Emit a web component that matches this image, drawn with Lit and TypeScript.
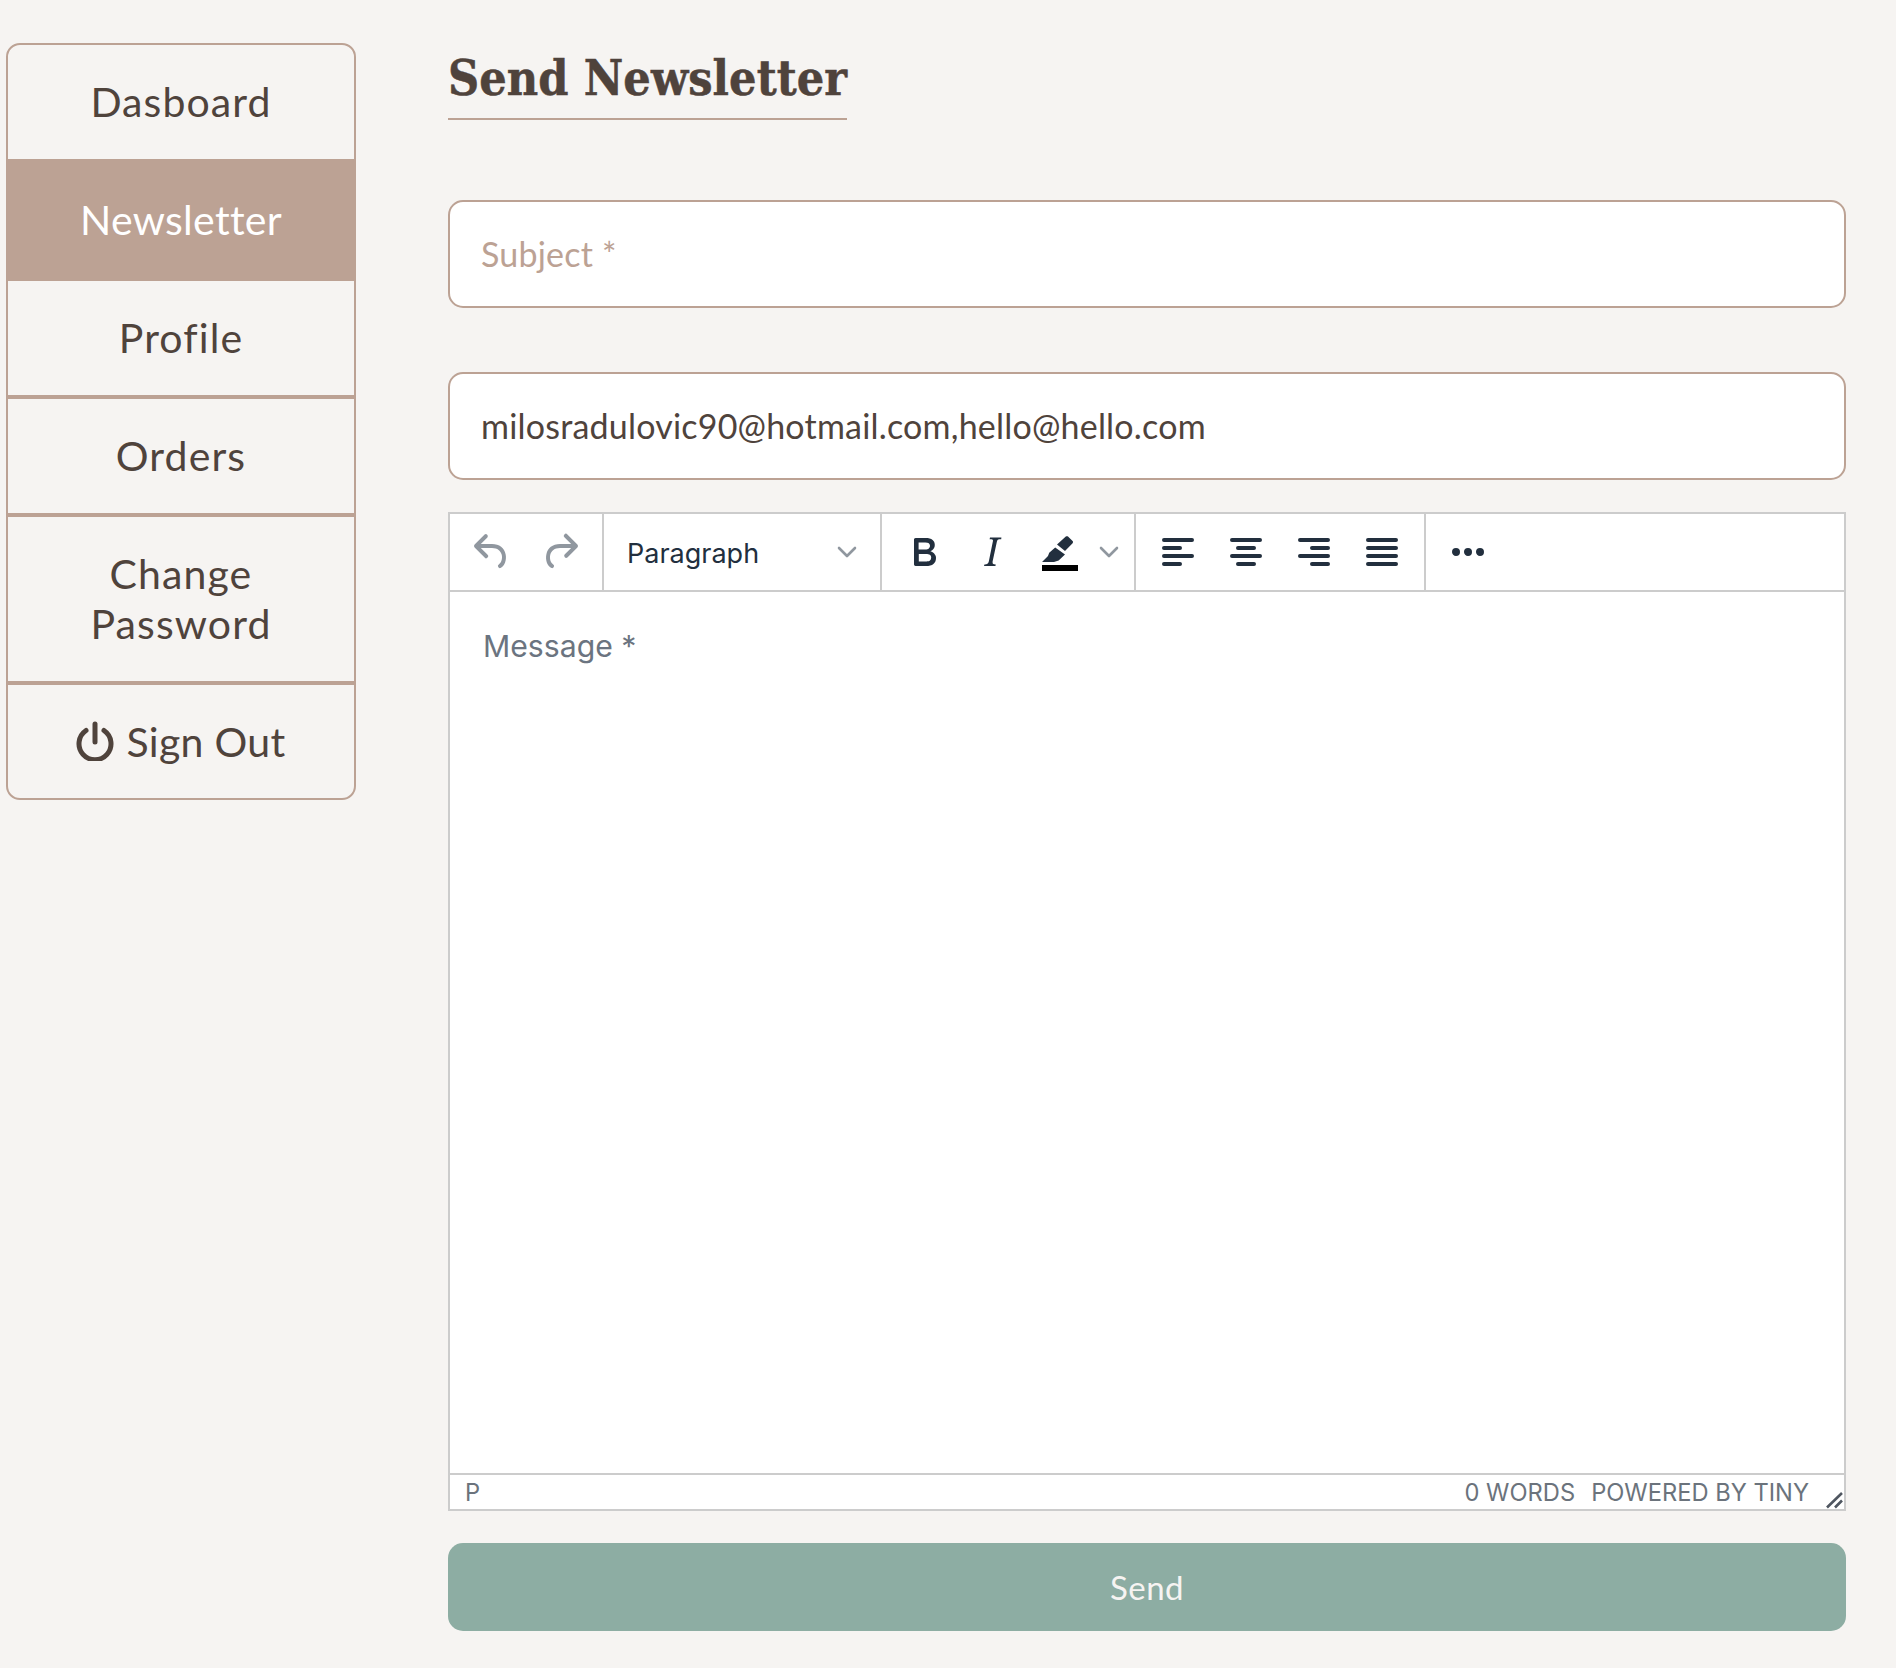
import { LitElement, html, css, svg } from "lit";
import { customElement } from "lit/decorators.js";

const ic = (d: string) => html`<svg class="ic" viewBox="0 0 24 24"><path d=${d}></path></svg>`;
const row = (x: number, w: number, y: number) => `M${x + 1} ${y}h${w - 2}a1 1 0 0 1 0 2H${x + 1}a1 1 0 0 1 0-2Z`;
const lines = (a: [number, number][]) => a.map(([x, w], i) => row(x, w, 5 + i * 4)).join("");

const UNDO = "M6.4 8H12c3.7 0 6.2 2 6.8 5.1.6 2.7-.4 5.6-2.3 6.8a1 1 0 0 1-1-1.8c1.1-.6 1.8-2.7 1.4-4.6-.5-2.1-2.1-3.5-4.9-3.5H6.4l3.3 3.3a1 1 0 1 1-1.4 1.4l-5-5a1 1 0 0 1 0-1.4l5-5a1 1 0 0 1 1.4 1.4L6.4 8Z";
const REDO = "M17.6 10H12c-2.8 0-4.4 1.4-4.9 3.5-.4 2 .3 4 1.4 4.6a1 1 0 1 1-1 1.8c-2-1.2-2.9-4.1-2.3-6.8.6-3 3-5.1 6.8-5.1h5.6l-3.3-3.3a1 1 0 1 1 1.4-1.4l5 5a1 1 0 0 1 0 1.4l-5 5a1 1 0 0 1-1.4-1.4l3.3-3.3Z";
const BOLD = "M7.8 19c-.3 0-.5 0-.6-.2l-.2-.5V5.7c0-.2 0-.4.2-.5l.6-.2h5c1.5 0 2.7.3 3.5 1 .7.6 1.1 1.4 1.1 2.5a3 3 0 0 1-.6 1.9c-.4.6-1 1-1.6 1.2.4.1.9.3 1.3.6s.8.7 1 1.2c.4.4.5 1 .5 1.6 0 1.3-.4 2.3-1.3 3-.8.7-2.1 1-3.8 1H7.8Zm5-8.3c.6 0 1.2-.1 1.6-.5.4-.3.6-.7.6-1.3 0-1.1-.8-1.7-2.3-1.7H9.3v3.5h3.4Zm.5 6c.7 0 1.3-.1 1.7-.4.4-.4.6-.9.6-1.5s-.2-1-.7-1.4c-.4-.3-1-.4-2-.4H9.4v3.8h4Z";
const ITALIC = "M16.7 4.7l-.1.9h-.3c-.6 0-1 0-1.4.3-.3.3-.4.6-.5 1.1l-2.1 9.8v.6c0 .5.4.8 1.4.8h.2l-.2.8H8l.2-.8h.2c1.1 0 1.8-.5 2-1.5l2-9.8.1-.5c0-.6-.4-.8-1.4-.8h-.3l.2-.9h5.8Z";
const MORE = "M6 10a2 2 0 0 0-2 2c0 1.1.9 2 2 2a2 2 0 0 0 2-2 2 2 0 0 0-2-2Zm12 0a2 2 0 0 0-2 2c0 1.1.9 2 2 2a2 2 0 0 0 2-2 2 2 0 0 0-2-2Zm-6 0a2 2 0 0 0-2 2c0 1.1.9 2 2 2a2 2 0 0 0 2-2 2 2 0 0 0-2-2Z";

@customElement("app-root")
export class AppRoot extends LitElement {
  static styles = css`
    :host { display: block; background: #f6f4f2; height: 1668px; color: #4f433c; font-family: "Lato", "Liberation Sans", sans-serif; overflow: hidden; }
    .page { display: flex; align-items: flex-start; padding-left: 6px; gap: 92px; }
    nav { width: 350px; box-sizing: border-box; margin-top: 43px; border: 2px solid #bca294; border-radius: 14px; display: flex; flex-direction: column; overflow: hidden; }
    .item { text-align: center; font-size: 41px; line-height: 50px; padding: 32px 30px; border-bottom: 4px solid #bca294; letter-spacing: 1.1px; }
    .item:first-child { border-bottom: 0; }
    .item.active { background: #bca294; color: #fff; border-bottom: 0; padding: 36px 30px; margin: 0 -2px; letter-spacing: 0.3px; }
    .item:last-child { border-bottom: 0; padding-bottom: 31px; }
    .signout { display: flex; justify-content: center; align-items: center; gap: 12px; letter-spacing: 0.3px !important; }
    .signout svg { width: 38px; height: 40px; fill: none; stroke: #4f433c; stroke-width: 5; stroke-linecap: round; margin-top: -2px; }
    main { flex: 1; margin-right: 50px; min-width: 0; }
    h1 { display: block; width: fit-content; height: 120px; box-sizing: border-box; margin: 0; padding-top: 33px; font: bold 48px/90px "DejaVu Serif Condensed", "DejaVu Serif", serif; letter-spacing: 0.1px; border-bottom: 2px solid #bca294; -webkit-text-stroke: 0.5px #4f433c; }
    .field { display: block; width: 100%; box-sizing: border-box; height: 108px; background: #fff; border: 2px solid #bca294; border-radius: 15px; padding: 0 31px 2px; font: 400 34px "Lato", sans-serif; color: #4f433c; outline: none; letter-spacing: 0.2px; }
    .field::placeholder { color: #bca294; opacity: 1; }
    .subject { margin-top: 80px; }
    .email { margin-top: 64px; }
    .editor { margin-top: 32px; height: 999px; box-sizing: border-box; border: 2px solid #ccc; background: #fff; display: flex; flex-direction: column; font-family: "Inter", sans-serif; color: #222f3e; }
    .toolbar { display: flex; height: 78px; box-sizing: border-box; border-bottom: 2px solid #ccc; }
    .group { display: flex; align-items: center; padding: 0 8px; border-right: 2px solid #ccc; box-sizing: border-box; }
    .group:last-child { border-right: 0; }
    .g1 { width: 154px; }
    .g2 { width: 278px; padding: 2px 0 0 23px; justify-content: space-between; font-size: 27px; }
    .g3 { width: 254px; }
    .g4 { width: 290px; }
    .btn { width: 68px; height: 60px; display: flex; align-items: center; justify-content: center; flex: none; }
    .ic { width: 48px; height: 48px; fill: #222f3e; flex: none; }
    .muted .ic { fill: #90979f; }
    .chev { width: 20px; height: 12px; fill: none; stroke: #90979f; stroke-width: 2.6; stroke-linecap: round; stroke-linejoin: round; flex: none; }
    .g2 .chev { margin-right: 23px; margin-top: -2px; }
    .g3 .chev { margin-left: 5px; }
    .body { flex: 1; padding: 35px 27px 0 28px; font-size: 30.2px; line-height: 38px; color: #6b7480; text-indent: 5px; }
    .status { position: relative; height: 36px; box-sizing: border-box; border-top: 2px solid #ccc; display: flex; align-items: center; padding: 0 35px 0 15px; justify-content: space-between; font-size: 23.7px; color: #6b737c; white-space: nowrap; }
    .status span.r { display: flex; gap: 16px; }
    .grip { position: absolute; right: 0; bottom: 0; width: 20px; height: 20px; fill: none; stroke: #4f5660; stroke-width: 2.6; }
    .send { display: block; width: 100%; height: 88px; margin-top: 32px; border: 0; border-radius: 15px; background: #8dada3; color: #f6f4f2; font: 400 33px "Lato", sans-serif; letter-spacing: 0.5px; }
  `;

  render() {
    return html`<div class="page">
      <nav>
        <div class="item">Dasboard</div>
        <div class="item active">Newsletter</div>
        <div class="item">Profile</div>
        <div class="item">Orders</div>
        <div class="item">Change Password</div>
        <div class="item signout">
          <svg viewBox="0 0 38 40"><path d="M19 3v18"></path><path d="M10 9.5a16 16 0 1 0 18 0"></path></svg>
          <span>Sign Out</span>
        </div>
      </nav>
      <main>
        <h1>Send Newsletter</h1>
        <input class="field subject" placeholder="Subject *" />
        <input class="field email" .value=${"milosradulovic90@hotmail.com,hello@hello.com"} />
        <div class="editor">
          <div class="toolbar">
            <div class="group g1 muted">
              <div class="btn">${ic(UNDO)}</div>
              <div class="btn">${ic(REDO)}</div>
            </div>
            <div class="group g2">
              <span>Paragraph</span>
              <svg class="chev" viewBox="0 0 20 12"><path d="M2 2l8 8 8-8"></path></svg>
            </div>
            <div class="group g3">
              <div class="btn">${ic(BOLD)}</div>
              <div class="btn">${ic(ITALIC)}</div>
              <div class="btn">
                <svg class="ic" viewBox="0 0 24 24">
                  <path d="M14.9 4.3c.4-.3.8-.3 1.1 0l2.3 2.2c.3.3.3.7 0 1.1L14.5 11.5 10.5 8.2Z"></path>
                  <path d="M9.6 9.8 14.5 13.2 11.3 16.2 9 17H3L6 14 6.6 12.4Z"></path>
                  <path d="M3 18.5h18v3H3Z" fill="#000"></path>
                </svg>
              </div>
              <svg class="chev" viewBox="0 0 20 12"><path d="M2 2l8 8 8-8"></path></svg>
            </div>
            <div class="group g4">
              <div class="btn">${ic(lines([[4, 16], [4, 10], [4, 16], [4, 10]]))}</div>
              <div class="btn">${ic(lines([[4, 16], [7, 10], [4, 16], [7, 10]]))}</div>
              <div class="btn">${ic(lines([[4, 16], [10, 10], [4, 16], [10, 10]]))}</div>
              <div class="btn">${ic(lines([[4, 16], [4, 16], [4, 16], [4, 16]]))}</div>
            </div>
            <div class="group">
              <div class="btn">${ic(MORE)}</div>
            </div>
          </div>
          <div class="body">Message *</div>
          <div class="status">
            <span>P</span>
            <span class="r"><span>0 WORDS</span><span>POWERED BY TINY</span></span>
            <svg class="grip" viewBox="0 0 20 20">${svg`<path d="M3 18.5 18 4M11 18.5l7-7"></path>`}</svg>
          </div>
        </div>
        <button class="send">Send</button>
      </main>
    </div>`;
  }
}
